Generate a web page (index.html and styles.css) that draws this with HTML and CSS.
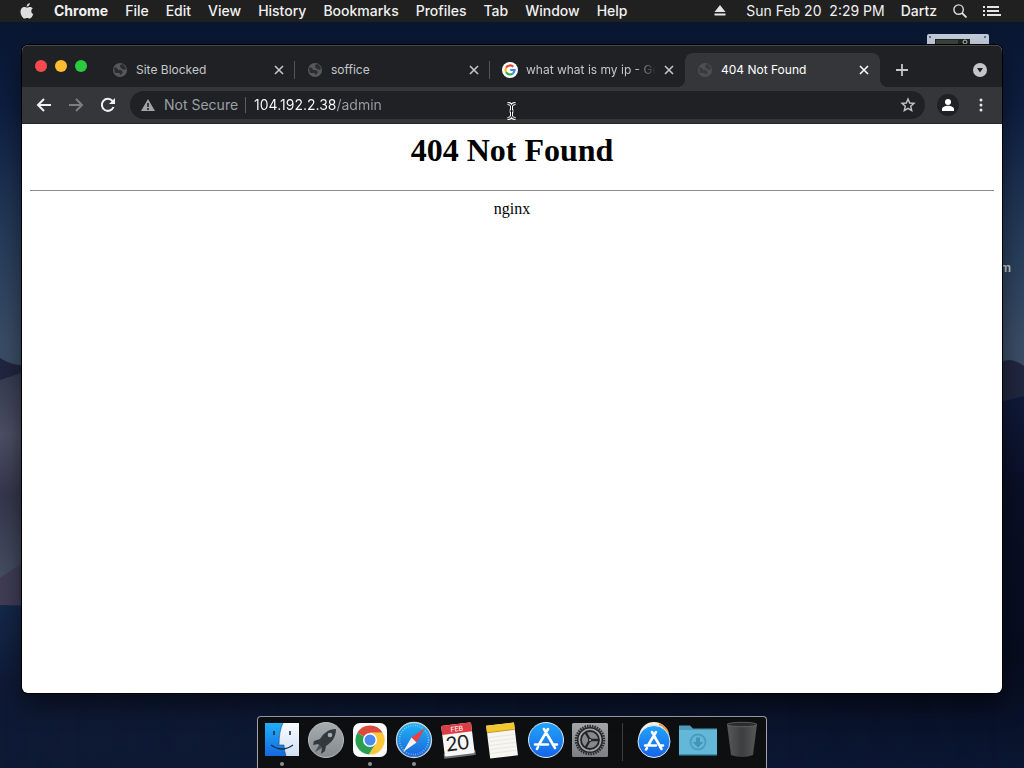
FILE: index.html
```html
<!DOCTYPE html>
<html lang="en">
<head>
<meta charset="utf-8">
<title>404 Not Found</title>
<link rel="stylesheet" href="styles.css">
</head>
<body class="desktop">
<svg class="wallpaper" viewBox="0 0 1024 768" preserveAspectRatio="none" aria-hidden="true">
  <defs>
    <linearGradient id="sky" x1="0" y1="0" x2="0" y2="1">
      <stop offset="0" stop-color="#08142c"/><stop offset=".14" stop-color="#0d1e40"/>
      <stop offset=".3" stop-color="#243a58"/><stop offset=".45" stop-color="#3a4d66"/><stop offset="1" stop-color="#3a506e"/>
    </linearGradient>
    <linearGradient id="dune" x1="0" y1="0" x2="0" y2="1">
      <stop offset="0" stop-color="#343a50"/><stop offset=".25" stop-color="#4d4f64"/>
      <stop offset=".5" stop-color="#36374c"/><stop offset=".85" stop-color="#465064"/><stop offset="1" stop-color="#444258"/>
    </linearGradient>
    <linearGradient id="ground" x1="0" y1="0" x2="0" y2="1">
      <stop offset="0" stop-color="#15294a"/><stop offset=".5" stop-color="#0f1a36"/><stop offset="1" stop-color="#0e1a34"/>
    </linearGradient>
    <linearGradient id="shade" x1="0" y1="0" x2="0" y2="1">
      <stop offset="0" stop-color="#101a3a"/><stop offset=".25" stop-color="#090f26"/>
      <stop offset=".7" stop-color="#070c1e"/><stop offset="1" stop-color="#0a1632"/>
    </linearGradient>
    <linearGradient id="fade"><stop offset="0" stop-color="#000"/><stop offset="1" stop-color="#fff"/></linearGradient>
    <mask id="right"><rect width="1024" height="768" fill="url(#fade)"/></mask>
  </defs>
  <rect width="1024" height="768" fill="url(#sky)"/>
  <path d="M0 358Q12 366 30 366L1000 363Q1010 356 1024 366V768H0z" fill="#20263f"/>
  <path d="M0 380L24 372H500V620H0z" fill="url(#dune)"/>
  <path d="M0 578L24 562H500V620H0z" fill="#403d55"/>
  <path d="M0 605L300 612H1024V768H0z" fill="url(#ground)"/>
  <path d="M0 400L1000 402L1024 396V768H0z" fill="url(#shade)" mask="url(#right)"/>
</svg>

<header class="menubar">
  <nav class="menus" aria-label="Application menu">
    <button class="menu menu-apple" aria-label="Apple"><svg width="14" height="17" viewBox="0 0 14 17"><path fill="#dedede" d="M9.800 0c.1 1-.3 1.900-.8 2.600-.6.700-1.400 1.200-2.300 1.100C6.600 2.800 7 1.900 7.500 1.300 8.100.600 9 .100 9.800 0zM12.700 5.600c-.9.600-1.400 1.400-1.400 2.600 0 1.300.8 2.400 2 2.800-.3.900-.7 1.700-1.200 2.500-.7 1-1.400 2-2.500 2-1 0-1.300-.6-2.500-.6s-1.500.6-2.500.6C3.500 15.500 2.800 14.500 2 13.400.3 10.900 0 7.700 1.300 5.800 2 4.700 3.200 4.100 4.300 4.100c1.200 0 1.900.6 2.900.6.900 0 1.500-.6 2.900-.6 1 0 2 .500 2.600 1.500z"/></svg></button>
    <button class="menu menu-app">Chrome</button>
    <button class="menu">File</button>
    <button class="menu">Edit</button>
    <button class="menu">View</button>
    <button class="menu">History</button>
    <button class="menu">Bookmarks</button>
    <button class="menu">Profiles</button>
    <button class="menu">Tab</button>
    <button class="menu">Window</button>
    <button class="menu">Help</button>
  </nav>
  <div class="status">
    <button class="menu menu-eject" aria-label="Eject"><svg width="12" height="12" viewBox="0 0 12 12" fill="#e4e4e4"><path d="M6 0l5.500 7H.5zM.5 8.500h11v2H.5z"/></svg></button>
    <time class="clock">Sun Feb 20&nbsp; 2:29 PM</time>
    <button class="menu">Dartz</button>
    <button class="menu" aria-label="Search"><svg width="14" height="14" viewBox="0 0 14 14" fill="none" stroke="#dedede" stroke-width="1.400"><circle cx="5.600" cy="5.600" r="4.700"/><path d="M9 9l4.500 4.500" stroke-width="1.800"/></svg></button>
    <button class="menu" aria-label="Notifications"><svg width="18" height="12" viewBox="0 0 18 12" fill="#e4e4e4"><path d="M0 1h2v2H0zM0 5h2v2H0zM0 9h2v2H0zM4 1h12v2H4zM4 5h12v2H4zM4 9h14v2H4z"/></svg></button>
  </div>
</header>

<div class="disk" aria-hidden="true"><svg width="62" height="30" viewBox="0 0 62 30"><rect width="62" height="30" rx="2" fill="#c3ccda"/><path d="M8 5h35v20H8z" fill="#202622"/><path d="M9 7h22M9 9h22" stroke="#59625c"/><circle cx="38" cy="8" r="2" fill="none" stroke="#b8c0ba"/><circle cx="3" cy="3" r="1" fill="#46505e"/><circle cx="58" cy="3" r="1" fill="#46505e"/></svg></div>
<span class="disk-label">m</span>

<main class="window">
  <div class="tabstrip">
    <div class="lights">
      <button class="light light-close" aria-label="Close window"></button>
      <button class="light light-min" aria-label="Minimize window"></button>
      <button class="light light-zoom" aria-label="Zoom window"></button>
    </div>
    <div class="tabs">
      <div class="tab">
        <svg class="favicon" viewBox="0 0 16 16"><circle cx="8" cy="8" r="7" fill="#55585c"/><path d="M2 6c2-1 4 0 4 2h3l2 2-2 3-2-2H3zM8 3l3-1 3 4-1 2-3-1-2-2z" fill="#2b2d30"/></svg>
        <a class="tab-title" href="#">Site Blocked</a>
        <button class="tab-close" aria-label="Close tab"><svg width="10" height="10" viewBox="0 0 10 10"><path d="M1 1l8 8M9 1L1 9"/></svg></button>
      </div>
      <div class="tab">
        <svg class="favicon" viewBox="0 0 16 16"><circle cx="8" cy="8" r="7" fill="#55585c"/><path d="M2 6c2-1 4 0 4 2h3l2 2-2 3-2-2H3zM8 3l3-1 3 4-1 2-3-1-2-2z" fill="#2b2d30"/></svg>
        <a class="tab-title" href="#">soffice</a>
        <button class="tab-close" aria-label="Close tab"><svg width="10" height="10" viewBox="0 0 10 10"><path d="M1 1l8 8M9 1L1 9"/></svg></button>
      </div>
      <div class="tab tab-last">
        <svg class="favicon" viewBox="0 0 16 16"><circle cx="8" cy="8" r="8" fill="#fff"/><g fill="none" stroke-width="2.200"><path d="M4.100 5.700A4.600 4.600 0 0 1 11.300 4.800" stroke="#ea4335"/><path d="M4.100 5.700A4.600 4.600 0 0 0 4.100 10.300" stroke="#fbbc05"/><path d="M4.100 10.300A4.600 4.600 0 0 0 10.900 11.500" stroke="#34a853"/><path d="M10.900 11.500A4.600 4.600 0 0 0 12.600 8H8.200" stroke="#4285f4"/></g></svg>
        <a class="tab-title tab-title-long" href="#">what what is my ip - Go</a>
        <button class="tab-close" aria-label="Close tab"><svg width="10" height="10" viewBox="0 0 10 10"><path d="M1 1l8 8M9 1L1 9"/></svg></button>
      </div>
      <div class="tab tab-active">
        <svg class="favicon" viewBox="0 0 16 16"><circle cx="8" cy="8" r="7" fill="#4d4f53"/><path d="M2 6c2-1 4 0 4 2h3l2 2-2 3-2-2H3zM8 3l3-1 3 4-1 2-3-1-2-2z" fill="#393a3e"/></svg>
        <a class="tab-title" href="#">404 Not Found</a>
        <button class="tab-close" aria-label="Close tab"><svg width="10" height="10" viewBox="0 0 10 10"><path d="M1 1l8 8M9 1L1 9"/></svg></button>
      </div>
    </div>
    <button class="new-tab" aria-label="New tab"><svg width="12" height="12" viewBox="0 0 12 12"><path d="M6 0v12M0 6h12" stroke="#c4c7ca" stroke-width="1.800"/></svg></button>
    <button class="tab-search" aria-label="Search tabs"><svg width="14" height="14" viewBox="0 0 14 14"><circle cx="7" cy="7" r="7" fill="#c4c7ca"/><path d="M4 5h6L7 9.500z" fill="#202124"/></svg></button>
  </div>

  <div class="toolbar">
    <button class="tool" aria-label="Back"><svg width="16" height="16" viewBox="0 0 16 16"><path d="M15 8H2M8 2L2 8l6 6" fill="none" stroke="#f1f1f1" stroke-width="2"/></svg></button>
    <button class="tool" aria-label="Forward"><svg width="16" height="16" viewBox="0 0 16 16"><path d="M1 8h13M8 2l6 6-6 6" fill="none" stroke="#7c7e82" stroke-width="2"/></svg></button>
    <button class="tool" aria-label="Reload"><svg width="16" height="16" viewBox="0 0 16 16"><path d="M13.500 10A6 6 0 1 1 12.500 4" fill="none" stroke="#f1f1f1" stroke-width="2"/><path d="M15 1v6H9z" fill="#f1f1f1"/></svg></button>
    <div class="omnibox">
      <button class="security"><svg width="16" height="14" viewBox="0 0 16 14"><path d="M8 1l7 12H1z" fill="#a0a3a7"/><path d="M8 5v4M8 10v2" stroke="#202124" stroke-width="1.600"/></svg><span>Not Secure</span></button>
      <input class="address" type="text" aria-label="Address" value="104.192.2.38/admin">
      <button class="star" aria-label="Bookmark this page"><svg width="16" height="16" viewBox="0 0 16 16"><path d="M8 2l1.700 4 4.300.4-3.300 2.900 1 4.300L8 11.300l-3.700 2.300 1-4.300L2 6.400 6.300 6z" fill="none" stroke="#c4c7ca" stroke-width="1.400"/></svg></button>
    </div>
    <button class="profile" aria-label="Profile"><svg width="14" height="14" viewBox="0 0 14 14" fill="#fff"><circle cx="7" cy="4" r="3"/><path d="M1 13v-2c0-2 3-3.300 6-3.300s6 1.300 6 3.300v2z"/></svg></button>
    <button class="more" aria-label="More"><svg width="4" height="14" viewBox="0 0 4 14" fill="#e8e8e8"><circle cx="2" cy="2" r="1.500"/><circle cx="2" cy="7" r="1.500"/><circle cx="2" cy="12" r="1.500"/></svg></button>
    <svg class="cursor" width="11" height="18" viewBox="0 0 11 18" aria-hidden="true"><path d="M1.500 1.500Q5.500 1.500 5.500 4.500Q5.500 1.500 9.500 1.500M5.500 4V14M3.500 9h4M1.500 16.500Q5.500 16.500 5.500 13.500Q5.500 16.500 9.500 16.500" fill="none" stroke="#fff" stroke-width="3"/><path d="M1.500 1.500Q5.500 1.500 5.500 4.500Q5.500 1.500 9.500 1.500M5.500 4V14M3.500 9h4M1.500 16.500Q5.500 16.500 5.500 13.500Q5.500 16.500 9.500 16.500" fill="none" stroke="#000"/></svg>
  </div>

  <article class="page">
    <h1 class="page-title">404 Not Found</h1>
    <hr class="page-rule">
    <p class="page-server">nginx</p>
  </article>
</main>

<nav class="dock" aria-label="Dock">
  <button class="app running" aria-label="Finder"><svg viewBox="0 0 38 38"><defs><linearGradient id="fl" x1="0" y1="0" x2="0" y2="1"><stop offset="0" stop-color="#1fb0fb"/><stop offset="1" stop-color="#1668df"/></linearGradient><linearGradient id="fr" x1="0" y1="0" x2="0" y2="1"><stop offset="0" stop-color="#fafcff"/><stop offset="1" stop-color="#cfe0f5"/></linearGradient></defs><path d="M2 2h34v33H2z" fill="url(#fl)"/><path d="M20 2h16v33H23q-2-6-2-11h-5Q16 10 20 2z" fill="url(#fr)"/><path d="M20 2Q16 10 16 24h5q0 5 2 11" fill="none" stroke="#27496e" stroke-width=".6"/><path d="M11 10v4M27 10v4" stroke="#14304d" stroke-width="1.600"/><path d="M8 24q11 8 22 0" fill="none" stroke="#14304d" stroke-width="1.400"/></svg></button>
  <button class="app" aria-label="Launchpad"><svg viewBox="0 0 38 38"><defs><linearGradient id="lp" x1="0" y1="0" x2="0" y2="1"><stop offset="0" stop-color="#a5abae"/><stop offset="1" stop-color="#858b8e"/></linearGradient></defs><circle cx="19" cy="19" r="17.500" fill="url(#lp)" stroke="#b9bdc0"/><path d="M29 8C21 8 16 13 13 18l-6 2-1 4 5-1 4 4-1 6 4-3 1-5c5-3 10-8 10-17z" fill="#34393d"/><circle cx="23" cy="14" r="2.300" fill="#a5abae"/><path d="M12 24l-4 7 7-4z" fill="#4b5155"/></svg></button>
  <button class="app running" aria-label="Chrome"><svg viewBox="0 0 38 38"><rect x="2" y="2" width="34" height="34" rx="7" fill="#fafafa"/><path d="M19 19L6.400 11.700A14.500 14.500 0 0 1 31.600 11.700H19z" fill="#dc4a3e"/><path d="M19 19L6.400 11.700A14.500 14.500 0 0 0 18 33.500L25 22.500z" fill="#2b9e52"/><path d="M19 11.700H31.600A14.500 14.500 0 0 1 18 33.500L25 22z" fill="#fbc83a"/><circle cx="19" cy="19" r="7" fill="#fff"/><circle cx="19" cy="19" r="5.500" fill="#4b8af0"/></svg></button>
  <button class="app running" aria-label="Safari"><svg viewBox="0 0 38 38"><defs><linearGradient id="sf" x1="0" y1="0" x2="0" y2="1"><stop offset="0" stop-color="#1fb6f6"/><stop offset="1" stop-color="#1c62d8"/></linearGradient></defs><circle cx="19" cy="19" r="17.500" fill="url(#sf)" stroke="#c8d2db" stroke-width="1.300"/><circle cx="19" cy="19" r="14.500" fill="none" stroke="#a5d8fa" stroke-width="1.600" stroke-dasharray=".6 1.700"/><path d="M30 7L16.500 16.500l5 5z" fill="#ee3e3e"/><path d="M8 31L16.500 16.500l5 5z" fill="#f2f2f2"/></svg></button>
  <button class="app" aria-label="Calendar"><svg viewBox="0 0 38 38"><g transform="rotate(-7 19 19)"><rect x="3" y="31" width="32" height="5" rx="1" fill="#6d6e71"/><rect x="4" y="3" width="30" height="31" rx="1.500" fill="#f7f7f7"/><path d="M5.500 3h27q1.500 0 1.500 1.500V12H4V4.500Q4 3 5.500 3z" fill="#dc3c44"/><text x="19" y="10.200" text-anchor="middle" class="cal-month">FEB</text><text x="18" y="29" text-anchor="middle" class="cal-day">20</text></g></svg></button>
  <button class="app" aria-label="Notes"><svg viewBox="0 0 38 38"><g transform="rotate(-7 19 19)"><path d="M5 3h28v33H5z" fill="#f7f6f1"/><path d="M5 3h28v7H5z" fill="#f5c72e"/><path d="M5 10h28" stroke="#a98619" stroke-width=".7"/><path d="M6 15h26M6 19h26M6 23h26M6 27h26M6 31h26" stroke="#e2e1dc" stroke-width=".7"/></g></svg></button>
  <button class="app" aria-label="App Store"><svg viewBox="0 0 38 38"><defs><linearGradient id="as" x1="0" y1="0" x2="0" y2="1"><stop offset="0" stop-color="#21a5fa"/><stop offset="1" stop-color="#1663e9"/></linearGradient></defs><circle cx="19" cy="19" r="17.500" fill="url(#as)" stroke="#e1e9f2"/><g fill="none" stroke="#fff" stroke-width="2.600" stroke-linecap="round"><path d="M21 8L12 23.500M17 8l11 19M8 23.500h13M26 23.500h4M11 26l-1 2"/></g></svg></button>
  <button class="app" aria-label="System Preferences"><svg viewBox="0 0 38 38"><defs><linearGradient id="sp" x1="0" y1="0" x2="0" y2="1"><stop offset="0" stop-color="#a2a5a8"/><stop offset="1" stop-color="#7c8084"/></linearGradient></defs><rect x="1" y="2" width="36" height="34" rx="1.500" fill="url(#sp)"/><circle cx="19" cy="19" r="14" fill="#8f9396" stroke="#27292b" stroke-width="2.500" stroke-dasharray="1.500 1"/><circle cx="19" cy="19" r="12.300" fill="#a2a5a7" stroke="#222426" stroke-width="1.600"/><circle cx="19" cy="19" r="9" fill="#85898c" stroke="#222426" stroke-width="1.800"/><path d="M19 19h9M19 19l-4.500-7.800M19 19l-4.500 7.800" stroke="#222426" stroke-width="2.300"/><circle cx="19" cy="19" r="1.600" fill="#999c9f" stroke="#222426"/></svg></button>
  <span class="dock-divider"></span>
  <button class="app" aria-label="Applications"><svg viewBox="0 0 38 38"><circle cx="19" cy="16" r="15" fill="#f4eee4"/><path d="M24 3q7 3 9 9" stroke="#e99c48" stroke-width="2" fill="none"/><circle cx="19" cy="20.500" r="16" fill="url(#as)" stroke="#e1e9f2"/><g fill="none" stroke="#fff" stroke-width="2.600" stroke-linecap="round"><path d="M21 11L13 24.500M17 11l9.500 17M10 24.500h11M25 24.500h3M12 27l-1 1.500"/></g></svg></button>
  <button class="app" aria-label="Downloads"><svg viewBox="0 0 38 38"><path d="M0 4.500h11l3 3h24V12H0z" fill="#4c9cba"/><path d="M0 9h38v25H0z" fill="#63b7d8"/><path d="M0 33h38v1.500H0z" fill="#3f8faf"/><circle cx="19" cy="21" r="7.500" fill="none" stroke="#4c9cbc" stroke-width="1.800"/><path d="M17 16.500h4V21h3.500L19 26.500 13.500 21H17z" fill="#4694b4"/></svg></button>
  <button class="app" aria-label="Trash"><svg viewBox="0 0 38 38"><defs><linearGradient id="tr"><stop offset="0" stop-color="#58595b"/><stop offset=".5" stop-color="#3c3e40"/><stop offset="1" stop-color="#58595b"/></linearGradient></defs><path d="M4 3l4 31q11 4 22 0l4-31z" fill="url(#tr)"/><ellipse cx="19" cy="3.500" rx="15" ry="2.200" fill="#2b2d2e" stroke="#66686a" stroke-width=".8"/></svg></button>
</nav>
</body>
</html>
```
FILE: styles.css
```css
* { box-sizing: border-box; }

button {
  margin: 0;
  padding: 0;
  border: 0;
  background: none;
  color: inherit;
  font: inherit;
}

svg { display: block; }

.desktop {
  position: relative;
  display: flex;
  flex-direction: column;
  height: 100vh;
  margin: 0;
  overflow: hidden;
  background: #0b1733;
  color: #f0f0f0;
  font-family: Inter, "Liberation Sans", sans-serif;
}

.wallpaper {
  position: absolute;
  inset: 0;
  z-index: -1;
  width: 100%;
  height: 100%;
}

/* Menu bar */
.menubar {
  display: flex;
  flex: none;
  align-items: center;
  justify-content: space-between;
  height: 22px;
  padding: 0 23px 0 20px;
  background: #202020;
  font-size: 14px;
  font-weight: 500;
  line-height: 22px;
  white-space: nowrap;
}

.menus, .status { display: flex; align-items: center; }
.menus { gap: 17px; }
.status { gap: 16px; }
.menu-apple { margin-right: 3px; }
.menu-app { font-weight: 700; }
.menu-eject { margin-right: 4px; }
.clock { font-weight: 400; }

/* Desktop items behind the window */
.disk {
  position: absolute;
  top: 34px;
  right: 35px;
}

.disk-label {
  position: absolute;
  top: 260px;
  right: 13px;
  color: #c5ccd6;
  font-size: 12px;
  font-weight: 600;
  line-height: 16px;
}

/* Browser window */
.window {
  position: relative;
  display: flex;
  flex: 1;
  flex-direction: column;
  min-height: 0;
  margin: 23px 22px;
  overflow: hidden;
  border-radius: 6px;
  background: #fff;
  box-shadow: 0 0 0 1px #000, 0 12px 24px rgba(0, 0, 0, .5);
}

.tabstrip {
  display: flex;
  flex: none;
  align-items: center;
  height: 42px;
  padding: 7px 15px 0 13px;
  border-top: 1px solid #45474a;
  background: #202124;
}

.lights { display: flex; gap: 8px; margin-bottom: 8px; }
.light { width: 12px; height: 12px; border-radius: 50%; }
.light-close { background: #f9494f; }
.light-min { background: #fbbd2e; }
.light-zoom { background: #2bcb3f; }

.tabs {
  display: flex;
  flex: 0 1 780px;
  align-self: stretch;
  min-width: 0;
  margin-left: 13px;
}

.tab {
  position: relative;
  display: flex;
  flex: 1;
  align-items: center;
  gap: 8px;
  min-width: 0;
  padding: 0 11px 0 12px;
  color: #c4c7ca;
  font-size: 12px;
  line-height: 16px;
}

.tab::after {
  content: "";
  position: absolute;
  top: 8px;
  right: 0;
  width: 1px;
  height: 18px;
  background: #505357;
}

.tab-last::after { display: none; }

.tab-active {
  border-radius: 8px 8px 0 0;
  background: #35363a;
  color: #fff;
}

/* Curved feet where the active tab meets the toolbar */
.tab-active::before,
.tab-active::after {
  content: "";
  position: absolute;
  top: auto;
  bottom: 0;
  width: 8px;
  height: 8px;
}

.tab-active::before {
  left: -8px;
  background: radial-gradient(circle at 0 0, transparent 8px, #35363a 8px);
}

.tab-active::after {
  right: -8px;
  background: radial-gradient(circle at 100% 0, transparent 8px, #35363a 8px);
}

.favicon { flex: none; width: 16px; height: 16px; }

.tab-title {
  flex: 1;
  min-width: 0;
  overflow: hidden;
  color: inherit;
  text-decoration: none;
  white-space: nowrap;
}

.tab-title-long {
  -webkit-mask-image: linear-gradient(to left, transparent, #000 20px);
  mask-image: linear-gradient(to left, transparent, #000 20px);
}

.tab-close svg { fill: none; stroke: currentColor; stroke-width: 1.6; }
.new-tab { margin-left: 16px; }
.tab-search { margin-left: auto; }

.toolbar {
  position: relative;
  display: flex;
  flex: none;
  align-items: center;
  height: 37px;
  padding: 0 14px;
  border-bottom: 1px solid #252629;
  background: #35363a;
}

.tool { margin-right: 16px; }

.omnibox {
  display: flex;
  flex: 1;
  align-items: center;
  min-width: 0;
  height: 28px;
  margin: 0 12px 0 -2px;
  padding: 0 9px 0 10px;
  border-radius: 14px;
  background: #202124;
  font-size: 14px;
  line-height: 20px;
}

.security {
  display: flex;
  flex: none;
  align-items: center;
  gap: 8px;
  padding-right: 7px;
  border-right: 1px solid #5a5d61;
  color: #9aa0a6;
  line-height: 16px;
}

.address {
  flex: 1;
  min-width: 0;
  margin: 0;
  padding: 0 0 0 8px;
  border: 0;
  outline: 0;
  background: linear-gradient(to right, #fff 90px, #9aa0a6 90px);
  -webkit-background-clip: text;
  background-clip: text;
  color: transparent;
  font: inherit;
}

.profile {
  display: grid;
  place-items: center;
  width: 22px;
  height: 22px;
  border-radius: 50%;
  background: #202124;
}

.more { margin: 0 5px 0 20px; }

.cursor { position: absolute; top: 15px; left: 484px; }

/* Page shown in the browser */
.page {
  flex: 1;
  padding: 8px;
  color: #000;
  font-family: "Liberation Serif", "Times New Roman", serif;
  font-size: 16px;
  text-align: center;
}

.page-title { margin: 0 0 21px; font-size: 32px; line-height: 37px; }

.page-rule {
  height: 1px;
  margin: 0 0 9px;
  border: 0;
  background: #8c8c8c;
}

.page-server { margin: 0; line-height: 18px; }

/* Dock */
.dock {
  display: flex;
  flex: none;
  align-self: center;
  height: 52px;
  padding: 4px 2px 0;
  border: 1px solid #a3a5a8;
  border-bottom: 0;
  border-radius: 4px 4px 0 0;
  background: #0e0f10;
}

.app {
  position: relative;
  display: flex;
  flex-direction: column;
  align-items: center;
  width: 44px;
}

.app svg { width: 38px; height: 38px; }

.running::after {
  content: "";
  width: 4px;
  height: 4px;
  margin-top: 3px;
  border-radius: 50%;
  background: #8f8f8f;
}

.dock-divider {
  width: 1px;
  height: 38px;
  margin: 2px 9px 0 10px;
  background: #3d3e40;
}

.cal-month { fill: #fff; font-size: 7px; font-family: Lato, sans-serif; }
.cal-day { fill: #222; font-size: 20px; font-family: Lato, sans-serif; }
```
